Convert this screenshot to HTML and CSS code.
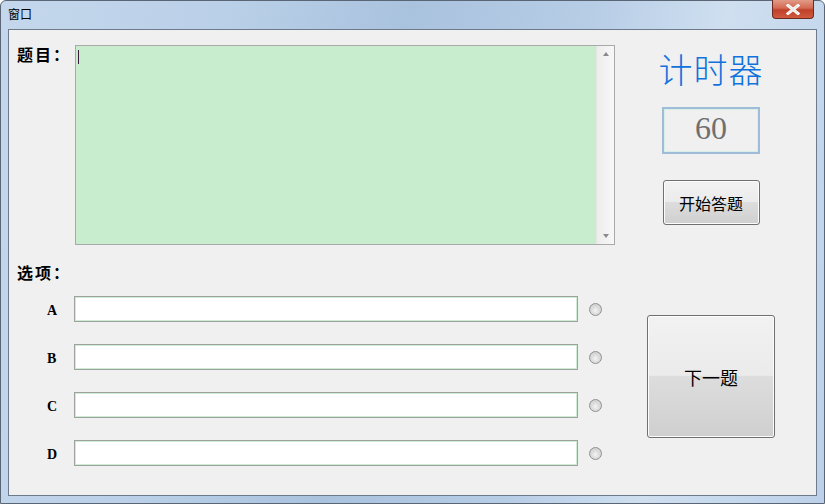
FILE: index.html
```html
<!DOCTYPE html>
<html lang="zh-CN">
<head>
    <meta charset="UTF-8">
    <meta name="viewport" content="width=device-width, initial-scale=1.0">
    <title>窗口</title>
    <link rel="stylesheet" href="styles.css">
</head>
<body>
    <div class="window">
        <div class="titlebar">
            <span class="title">窗口</span>
            <div class="close-btn">
                <svg width="14" height="11" viewBox="0 0 14 11">
                    <path d="M2 1.5 L12 9.5 M12 1.5 L2 9.5" stroke="#ffffff" stroke-width="3" stroke-linecap="square"/>
                    <path d="M2 1.5 L12 9.5 M12 1.5 L2 9.5" stroke="#e9e9e9" stroke-width="1.6"/>
                </svg>
            </div>
        </div>
        <div class="client">
            <div class="left">
                <div class="question-row">
                    <div class="label">题目：</div>
                    <div class="question-box">
                        <div class="question-text"><span class="caret"></span></div>
                        <div class="scrollbar">
                            <span class="arrow up"></span>
                            <span class="arrow down"></span>
                        </div>
                    </div>
                </div>
                <div class="label options-label">选项：</div>
                <div class="options">
                    <div class="option-row">
                        <span class="opt-letter">A</span>
                        <div class="opt-input"></div>
                        <span class="radio"></span>
                    </div>
                    <div class="option-row">
                        <span class="opt-letter">B</span>
                        <div class="opt-input"></div>
                        <span class="radio"></span>
                    </div>
                    <div class="option-row">
                        <span class="opt-letter">C</span>
                        <div class="opt-input"></div>
                        <span class="radio"></span>
                    </div>
                    <div class="option-row">
                        <span class="opt-letter">D</span>
                        <div class="opt-input"></div>
                        <span class="radio"></span>
                    </div>
                </div>
            </div>
            <div class="right">
                <div class="timer-title">计时器</div>
                <div class="timer-box">60</div>
                <button class="btn start-btn">开始答题</button>
                <button class="btn next-btn">下一题</button>
            </div>
        </div>
    </div>
</body>
</html>
```

FILE: styles.css
```css
body {
    margin: 0;
    font-family: "Noto Sans CJK SC", sans-serif;
}
.window {
    width: 825px;
    height: 504px;
    box-sizing: border-box;
    border: 1px solid #5a6676;
    border-radius: 6px 6px 0 0;
    background: linear-gradient(100deg, #c4d7ec 0%, #bad0e8 25%, #a9c2de 45%, #b7cde6 65%, #cfdff0 80%, #bcd1e9 100%);
}
.titlebar {
    height: 28px;
    position: relative;
}
.title {
    position: absolute;
    left: 7px;
    top: 6px;
    font-size: 12px;
    line-height: 14px;
    color: #000;
}
.close-btn {
    position: absolute;
    right: 10px;
    top: -1px;
    width: 42px;
    height: 19px;
    box-sizing: border-box;
    border: 1px solid #6e2a20;
    border-top: none;
    border-radius: 0 0 4px 4px;
    background: linear-gradient(#e19a86 0%, #d36a52 45%, #c0412b 55%, #cf5a3e 100%);
    display: flex;
    align-items: center;
    justify-content: center;
}
.client {
    margin: 0 7px;
    height: 467px;
    box-sizing: border-box;
    border: 1px solid #6d7a8b;
    background: #f0f0f0;
    display: flex;
}
.left {
    width: 606px;
    padding: 15px 0 0 8px;
    box-sizing: border-box;
}
.label {
    font-family: "Liberation Serif", "Noto Sans CJK SC", serif;
    font-weight: bold;
    font-size: 16px;
    line-height: 20px;
    letter-spacing: 2px;
    color: #000;
}
.question-row {
    display: flex;
}
.question-row .label {
    width: 58px;
    padding-top: 1px;
}
.question-box {
    width: 540px;
    height: 200px;
    box-sizing: border-box;
    border: 1px solid #a9a9a9;
    display: flex;
    background: #f4f4f4;
}
.question-text {
    flex: 1;
    background: #c8ecce;
    border: 1px solid #c8ecce;
    padding: 3px 0 0 1px;
}
.caret {
    display: block;
    width: 1px;
    height: 14px;
    background: #3b1a3a;
}
.scrollbar {
    width: 17px;
    border-left: 1px solid #e6e6e6;
    background: linear-gradient(90deg, #ececec, #f8f8f8);
    display: flex;
    flex-direction: column;
    justify-content: space-between;
    align-items: center;
    padding: 6px 0 6px;
}
.arrow {
    width: 0;
    height: 0;
    border-left: 3px solid transparent;
    border-right: 3px solid transparent;
}
.arrow.up {
    border-bottom: 4px solid #8a8a8a;
}
.arrow.down {
    border-top: 4px solid #8a8a8a;
}
.options-label {
    margin-top: 19px;
}
.options {
    margin-top: 12px;
    display: flex;
    flex-direction: column;
    gap: 22px;
}
.option-row {
    display: flex;
    align-items: center;
    height: 26px;
    padding-left: 30px;
}
.opt-letter {
    width: 27px;
    padding-top: 3px;
    font-family: "Liberation Serif", serif;
    font-weight: bold;
    font-size: 14px;
}
.opt-input {
    width: 504px;
    height: 26px;
    box-sizing: border-box;
    border: 1px solid #a0a0a0;
    box-shadow: inset 0 0 0 1px #cdeed3;
    background: #fff;
}
.radio {
    margin-left: 11px;
    width: 13px;
    height: 13px;
    box-sizing: border-box;
    border-radius: 50%;
    border: 1px solid #8e9192;
    background: radial-gradient(circle at 50% 60%, #f4f4f4 0%, #dcdcdc 45%, #c6c6c6 100%);
}
.right {
    width: 192px;
    display: flex;
    flex-direction: column;
    align-items: center;
}
.timer-title {
    margin-top: 18px;
    font-size: 34px;
    line-height: 42px;
    color: #0f72dd;
    font-weight: 300;
    letter-spacing: 1px;
}
.timer-box {
    margin-top: 17px;
    width: 98px;
    height: 47px;
    box-sizing: border-box;
    border: 2px solid #9fbcd8;
    box-shadow: inset 0 0 0 1px #d8efe6;
    background: #f0f0f0;
    font-family: "Liberation Serif", serif;
    font-size: 32px;
    line-height: 39px;
    color: #6f6f6f;
    text-align: center;
}
.btn {
    font-family: "Noto Sans CJK SC", sans-serif;
    color: #000;
    border: 1px solid #707070;
    border-radius: 3px;
    background: linear-gradient(#f2f2f2 0%, #ebebeb 49%, #dddddd 50%, #cfcfcf 100%);
    box-shadow: inset 0 0 0 1px #fcfcfc;
    padding: 0;
    cursor: pointer;
}
.start-btn {
    margin-top: 26px;
    width: 97px;
    height: 45px;
    font-size: 16px;
}
.next-btn {
    margin-top: 90px;
    width: 128px;
    height: 123px;
    font-size: 18px;
}
```
